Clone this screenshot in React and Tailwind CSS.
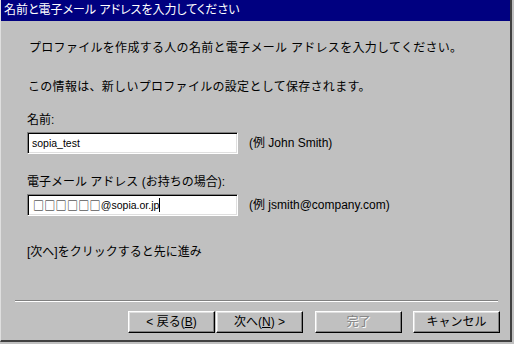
export default function App() {
  const font = "font-['Liberation_Sans','Noto_Sans_CJK_JP',sans-serif]";

  const Btn = ({ children, disabled }) => (
    <div className="w-[87px] h-[22px] flex items-center justify-center border border-t-white border-l-white border-r-black border-b-black shadow-[inset_-1px_-1px_#808080,inset_1px_1px_#dfdfdf] text-[12px]">
      <span className={disabled ? "text-[#808080] [text-shadow:1px_1px_#ffffff]" : "text-black"}>
        {children}
      </span>
    </div>
  );

  const Field = ({ children }) => (
    <div className="w-[211px] h-[22px] bg-white flex items-center pl-[4px] border border-t-[#808080] border-l-[#808080] border-r-white border-b-white shadow-[inset_1px_1px_#000,inset_-1px_-1px_#dfdfdf] text-[10.5px] text-black">
      {children}
    </div>
  );

  return (
    <div className={`w-[514px] h-[344px] bg-[#c0c0c0] ${font}`}>
      <div className="w-[512px] h-[342px] flex flex-col border-l border-l-[#dfdfdf] border-r-2 border-r-[#404040] border-b-2 border-b-[#404040]">
        <div className="h-[21px] bg-[#000080] text-white text-[12px] leading-[21px] pl-[3px] [font-feature-settings:'palt']">
          名前と電子メール アドレスを入力してください
        </div>

        <div className="flex flex-col pl-[26px] text-[12px] text-black leading-[16px]">
          <p className="mt-[19px] pl-[2px] tracking-[0.3px]">
            プロファイルを作成する人の名前と電子メール アドレスを入力してください。
          </p>
          <p className="mt-[23px] pl-[1px] tracking-[0.3px]">
            この情報は、新しいプロファイルの設定として保存されます。
          </p>

          <p className="mt-[17px]">名前:</p>
          <div className="mt-[4px] flex items-center gap-[11px]">
            <Field>sopia_test</Field>
            <span>(例 John Smith)</span>
          </div>

          <p className="mt-[20px]">電子メール アドレス (お持ちの場合):</p>
          <div className="mt-[4px] flex items-center gap-[11px]">
            <Field>
              <span className="font-['Noto_Sans_CJK_JP',sans-serif] text-[11px] pl-[1px] tracking-[0.3px]">
                □□□□□□
              </span>
              <span>@sopia.or.jp</span>
              <span className="w-px h-[14px] bg-black" />
            </Field>
            <span>(例 jsmith@company.com)</span>
          </div>

          <p className="mt-[28px]">[次へ]をクリックすると先に進み</p>
        </div>

        <div className="flex-1" />

        <div className="ml-[14px] w-[483px] border-t border-t-[#808080] border-b border-b-white" />

        <div className="flex justify-end pr-[10px] mt-[9px] mb-[7px]">
          <Btn>
            &lt; 戻る(<span className="underline">B</span>)
          </Btn>
          <div className="w-[1px]" />
          <Btn>
            次へ(<span className="underline">N</span>) &gt;
          </Btn>
          <div className="w-[12px]" />
          <Btn disabled>完了</Btn>
          <div className="w-[11px]" />
          <Btn>キャンセル</Btn>
        </div>
      </div>
    </div>
  );
}
